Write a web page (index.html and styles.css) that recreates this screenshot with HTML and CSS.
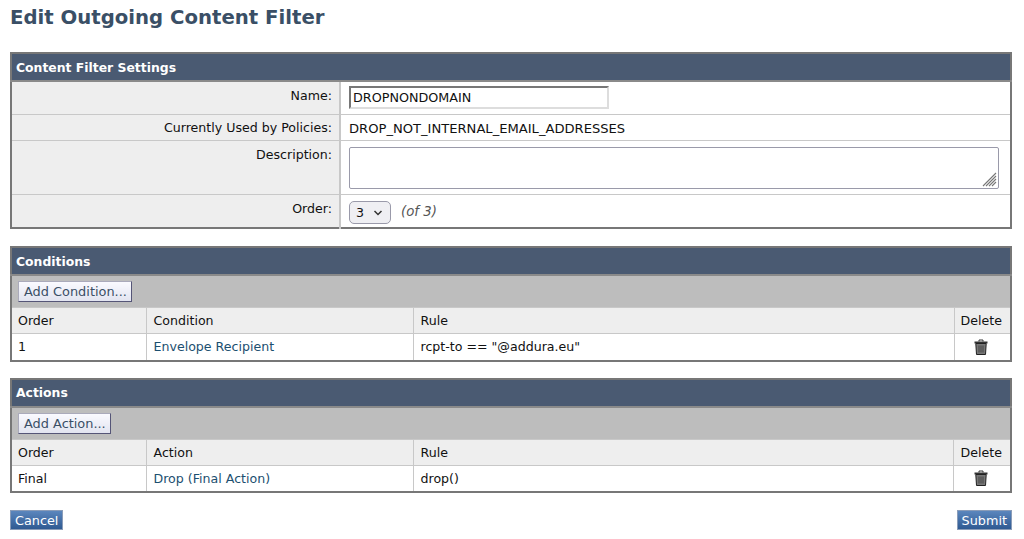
FILE: index.html
```html
<!DOCTYPE html>
<html lang="en">
<head>
<meta charset="UTF-8">
<title>Edit Outgoing Content Filter</title>
<link rel="stylesheet" href="styles.css">
</head>
<body>
    <h1>Edit Outgoing Content Filter</h1>

    <table class="panel settings">
        <colgroup><col class="colLabel"><col></colgroup>
        <tr><th colspan="2" class="panelHead">Content Filter Settings</th></tr>
        <tr class="rowName">
            <td class="label">Name:</td>
            <td class="field"><input class="nameInput" type="text" value="DROPNONDOMAIN"></td>
        </tr>
        <tr class="rowUsed">
            <td class="label labelMid">Currently Used by Policies:</td>
            <td class="field policyName">DROP_NOT_INTERNAL_EMAIL_ADDRESSES</td>
        </tr>
        <tr class="rowDesc">
            <td class="label">Description:</td>
            <td class="field">
                <div class="descWrap">
                    <textarea class="descInput"></textarea>
                    <svg class="grip" width="15" height="15" viewBox="0 0 15 15"><path d="M1 14 L14 1 M4 14 L14 4 M7 14 L14 7 M10 14 L14 10" stroke="#777" stroke-width="1.1" fill="none"/></svg>
                </div>
            </td>
        </tr>
        <tr class="rowOrder">
            <td class="label">Order:</td>
            <td class="field orderField">
                <span class="orderSelect">3
                    <svg width="10" height="6" viewBox="0 0 10 6"><path d="M1.5 1 L5 4.5 L8.5 1" fill="none" stroke="#333" stroke-width="1.5"/></svg>
                </span>
                <em class="orderOf">(of 3)</em>
            </td>
        </tr>
    </table>

    <table class="panel list">
        <colgroup><col class="colOrder"><col class="colName"><col><col class="colDelete"></colgroup>
        <tr><th colspan="4" class="panelHead">Conditions</th></tr>
        <tr><td colspan="4" class="toolbar"><button class="addButton">Add Condition...</button></td></tr>
        <tr class="listHead">
            <td class="orderCell">Order</td>
            <td>Condition</td>
            <td>Rule</td>
            <td class="deleteCell">Delete</td>
        </tr>
        <tr class="listRow">
            <td class="orderCell">1</td>
            <td><a href="#">Envelope Recipient</a></td>
            <td>rcpt-to == "@addura.eu"</td>
            <td class="deleteCell">
                <svg class="trash" width="14" height="16" viewBox="0 0 14 16"><path d="M5 2.5 V1 H9 V2.5" fill="none" stroke="#333" stroke-width="1"/><path d="M0.5 2.5 H13.5 V4.5 H0.5 Z" fill="#333"/><path d="M1.8 4.5 H12.2 L11.5 15.5 H2.5 Z" fill="#777" stroke="#222" stroke-width="1"/><path d="M5 6.5 V13.5 M7 6.5 V13.5 M9 6.5 V13.5" stroke="#444" stroke-width="1"/></svg>
            </td>
        </tr>
    </table>

    <table class="panel list">
        <colgroup><col class="colOrder"><col class="colName"><col><col class="colDelete"></colgroup>
        <tr><th colspan="4" class="panelHead">Actions</th></tr>
        <tr><td colspan="4" class="toolbar"><button class="addButton">Add Action...</button></td></tr>
        <tr class="listHead">
            <td class="orderCell">Order</td>
            <td>Action</td>
            <td>Rule</td>
            <td class="deleteCell">Delete</td>
        </tr>
        <tr class="listRow">
            <td class="orderCell">Final</td>
            <td><a href="#">Drop (Final Action)</a></td>
            <td>drop()</td>
            <td class="deleteCell">
                <svg class="trash" width="14" height="16" viewBox="0 0 14 16"><path d="M5 2.5 V1 H9 V2.5" fill="none" stroke="#333" stroke-width="1"/><path d="M0.5 2.5 H13.5 V4.5 H0.5 Z" fill="#333"/><path d="M1.8 4.5 H12.2 L11.5 15.5 H2.5 Z" fill="#777" stroke="#222" stroke-width="1"/><path d="M5 6.5 V13.5 M7 6.5 V13.5 M9 6.5 V13.5" stroke="#444" stroke-width="1"/></svg>
            </td>
        </tr>
    </table>

    <div class="formButtons">
        <button class="blueButton">Cancel</button>
        <button class="blueButton">Submit</button>
    </div>
</body>
</html>
```

FILE: styles.css
```css
body {
    margin: 0;
    padding: 0 12px 0 10px;
    background-color: #fff;
    color: #111;
    font-family: "DejaVu Sans", Verdana, sans-serif;
    font-size: 12.6px;
    overflow: hidden;
}

h1 {
    margin: 0;
    padding-top: 6px;
    height: 52px;
    box-sizing: border-box;
    font-size: 19.7px;
    line-height: 23px;
    color: #3a4f66;
}

.panel {
    width: 100%;
    border-collapse: collapse;
    table-layout: fixed;
    border: 2px solid #777;
    margin-bottom: 16px;
}

.settings {
    margin-bottom: 17px;
}

.panel td {
    border: 1px solid #c8c8c8;
    padding: 0 7px;
}

.panelHead {
    height: 26px;
    padding: 0 4px;
    background-color: #4a5a72;
    color: #fff;
    font-size: 12.4px;
    font-weight: bold;
    text-align: left;
    border-bottom: 2px solid #8a8a8a;
}

/* settings table */
.colLabel { width: 329px; }

.settings .label {
    padding-top: 6px;
    background-color: #eee;
    text-align: right;
    vertical-align: top;
    padding-right: 7px;
    border-right: 2px solid #c8c8c8;
}

.settings .labelMid {
    padding-top: 0;
    vertical-align: middle;
}

.rowName { height: 33px; }
.rowUsed { height: 26px; }
.rowDesc { height: 54px; }
.rowOrder { height: 34px; }

.settings .field {
    padding-left: 8px;
    padding-right: 11px;
}

.settings .policyName {
    padding-top: 2px;
    font-size: 13.1px;
}

.settings .orderField {
    padding-top: 4px;
}

.nameInput {
    display: block;
    width: 260px;
    height: 23px;
    box-sizing: border-box;
    padding: 0 2px;
    border: 2px solid;
    border-color: #777 #ddd #ddd #777;
    font-family: inherit;
    font-size: 12.75px;
    color: #111;
}

.descWrap {
    position: relative;
    margin-top: 2px;
}

.descInput {
    display: block;
    width: 100%;
    height: 42px;
    box-sizing: border-box;
    border: 1px solid #9a9aaa;
    border-radius: 2px;
    background-color: #fff;
    margin: 0;
    resize: none;
}

.grip {
    position: absolute;
    right: 2px;
    bottom: 2px;
}

.orderSelect {
    display: inline-flex;
    align-items: center;
    gap: 9px;
    box-sizing: border-box;
    width: 42px;
    height: 23px;
    padding-left: 6px;
    background-color: #efeff3;
    border: 1px solid #9a9aaa;
    border-radius: 5px;
    vertical-align: middle;
}

.orderOf {
    margin-left: 6px;
    font-size: 13.3px;
    color: #555;
}

/* conditions and actions */
.colOrder { width: 135px; }
.colName { width: 267px; }
.colDelete { width: 57px; }

.panel .toolbar {
    height: 31px;
    padding: 0 6px;
    background-color: #bdbdbd;
}

.addButton {
    display: block;
    height: 21px;
    padding: 0 4px 0 5px;
    background: linear-gradient(#fafaff, #e2e4f0);
    border: 1px solid;
    border-color: #aab #557 #557 #aab;
    color: #3a4f66;
    font-family: inherit;
    font-size: 12.9px;
}

.listHead {
    height: 26px;
    background-color: #eee;
}

.listRow {
    height: 27px;
}

.panel .orderCell {
    padding-left: 6px;
}

.panel .deleteCell {
    padding: 0 2px 0 0;
    text-align: center;
}

.trash {
    display: block;
    margin: 0 auto;
}

a {
    color: #1c4f70;
    text-decoration: none;
}

.formButtons {
    display: flex;
    justify-content: space-between;
    margin-top: 17px;
}

.blueButton {
    height: 20px;
    padding: 0 4px;
    background: linear-gradient(#5b86bd, #2f5a92);
    border: 1px solid #8a9cb8;
    color: #fff;
    font-family: inherit;
    font-size: 12.8px;
}
```
